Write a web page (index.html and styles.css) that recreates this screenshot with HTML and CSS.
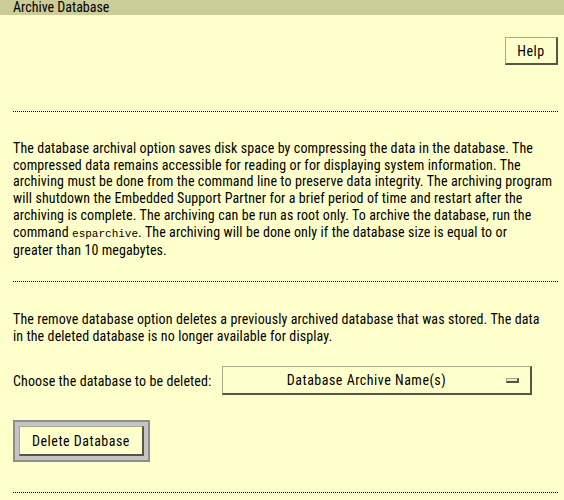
FILE: index.html
```html
<!DOCTYPE html>
<html>
<head>
<meta charset="utf-8">
<title>Archive Database</title>
<link rel="stylesheet" href="styles.css">
</head>
<body>
<div class="titlebar">Archive Database</div>
<div class="content">
  <div class="toolbar">
    <button class="btn help-btn" type="button">Help</button>
  </div>
  <div class="rule rule-first"></div>
  <p class="desc desc-first">The database archival option saves disk space by compressing the data in the database. The<br>compressed data remains accessible for reading or for displaying system information. The<br>archiving must be done from the command line to preserve data integrity. The archiving program<br>will shutdown the Embedded Support Partner for a brief period of time and restart after the<br>archiving is complete. The archiving can be run as root only. To archive the database, run the<br>command <code class="cmd">esparchive</code>. The archiving will be done only if the database size is equal to or<br>greater than 10 megabytes.</p>
  <div class="rule rule-mid"></div>
  <p class="desc desc-second">The remove database option deletes a previously archived database that was stored. The data<br>in the deleted database is no longer available for display.</p>
  <div class="choose-row">
    <span class="choose-label">Choose the database to be deleted:</span>
    <div class="select">
      <span class="select-text">Database Archive Name(s)</span>
      <span class="select-ind"></span>
    </div>
  </div>
  <div class="default-frame">
    <button class="btn delete-btn" type="button">Delete Database</button>
  </div>
  <div class="rule rule-last"></div>
</div>
</body>
</html>
```
FILE: styles.css
```css
html, body {
  margin: 0;
  padding: 0;
  background: #ffffcc;
}
body {
  font-family: Roboto, "Liberation Sans", sans-serif;
  font-stretch: 75%;
  font-size: 14px;
  letter-spacing: 0.1px;
  color: #000;
}
.titlebar {
  height: 15px;
  line-height: 15px;
  background: #cccc99;
  padding-left: 13px;
  font-size: 14px;
  letter-spacing: 0;
}
.content {
  padding: 0 6px 0 13px;
}
.toolbar {
  display: flex;
  justify-content: flex-end;
  margin-top: 22px;
}
.btn {
  font-family: Roboto, "Liberation Sans", sans-serif;
  font-stretch: 75%;
  font-size: 14px;
  letter-spacing: 0.5px;
  color: #000;
  background: #ffffcc;
  border-style: solid;
  border-width: 1px 2px 2px 1px;
  border-color: #a8a890 #555548 #555548 #a8a890;
  padding: 0;
  margin: 0;
  cursor: pointer;
}
.help-btn {
  width: 53px;
  height: 28px;
}
.rule {
  border-top: 1px dotted #000;
  height: 0;
}
.rule-first {
  margin-top: 46px;
}
.desc {
  margin: 0;
  line-height: 16.7px;
}
.desc-first {
  margin-top: 28px;
}
.cmd {
  font-family: "Liberation Mono", monospace;
  font-stretch: normal;
  font-size: 11px;
  letter-spacing: 0;
}
.rule-mid {
  margin-top: 22px;
}
.desc-second {
  margin-top: 29px;
}
.choose-row {
  display: flex;
  align-items: center;
  margin-top: 22px;
}
.choose-label {
  width: 209px;
}
.select {
  box-sizing: border-box;
  width: 310px;
  height: 29px;
  display: flex;
  align-items: center;
  border-style: solid;
  border-width: 1px 2px 2px 1px;
  border-color: #a8a890 #555548 #555548 #a8a890;
  background: #ffffcc;
}
.select-text {
  flex: 1;
  text-align: center;
  padding-left: 4px;
  letter-spacing: 0.5px;
}
.select-ind {
  box-sizing: border-box;
  width: 13px;
  height: 5px;
  margin-right: 11px;
  border-style: solid;
  border-width: 1px 2px 2px 1px;
  border-color: #a8a890 #555548 #555548 #a8a890;
  background: #eeeebb;
}
.default-frame {
  display: inline-block;
  margin-top: 25px;
  border: 2px solid #8e8e8e;
  background: #c4c4c4;
  padding: 4px;
}
.delete-btn {
  display: block;
  width: 125px;
  height: 30px;
}
.rule-last {
  margin-top: 30px;
}
```
